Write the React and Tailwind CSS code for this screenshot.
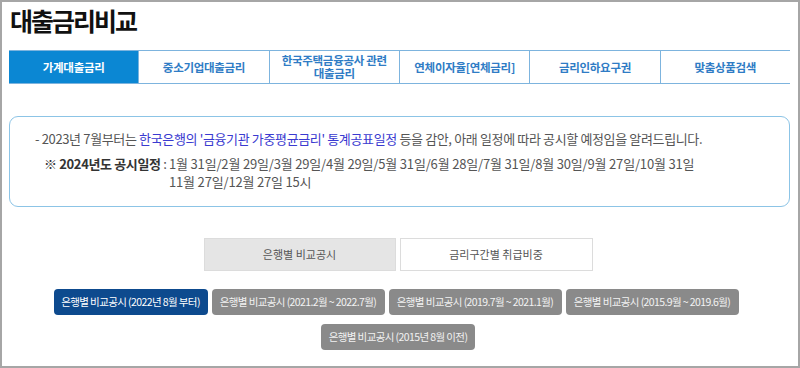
import React from "react";

const tabs = [
  "가계대출금리",
  "중소기업대출금리",
  "한국주택금융공사 관련\n대출금리",
  "연체이자율[연체금리]",
  "금리인하요구권",
  "맞춤상품검색",
];

const btns = [
  "은행별 비교공시 (2021.2월 ~ 2022.7월)",
  "은행별 비교공시 (2019.7월 ~ 2021.1월)",
  "은행별 비교공시 (2015.9월 ~ 2019.6월)",
];

export default function App() {
  return (
    <div
      className="w-[800px] h-[368px] bg-white border-2 border-[#a6a6a6] overflow-hidden"
      style={{ fontFamily: '"Noto Sans CJK KR", "Noto Sans", sans-serif' }}
    >
      <div className="pl-[7px] pr-[8px]">
        <h1 className="text-[25px] leading-[30px] font-bold text-[#111] tracking-[-2px] pt-[3px] pl-[1px]">
          대출금리비교
        </h1>

        <div className="mt-[15px] flex h-[34px] border-y border-[#7db4de]">
          {tabs.map((t, i) => (
            <div
              key={i}
              className={
                "flex-1 flex items-center justify-center text-center text-[11.5px] leading-[13px] font-bold whitespace-pre-line tracking-[-0.3px] " +
                (i === 0
                  ? "bg-[#0b87d3] text-white"
                  : "text-[#2f7cc5] border-l border-[#7db4de]")
              }
            >
              {t}
            </div>
          ))}
        </div>

        <div className="mt-[32px] h-[91px] border border-[#8cc4e6] rounded-[9px] pl-[25px] pt-[13px] text-[13px] text-[#555] tracking-[-0.36px]">
          <p className="leading-[18px]">
            - 2023년 7월부터는{" "}
            <span className="text-[#3a3ad0]">
              한국은행의 '금융기관 가중평균금리' 통계공표일정
            </span>{" "}
            등을 감안, 아래 일정에 따라 공시할 예정임을 알려드립니다.
          </p>
          <div className="flex mt-[7px] pl-[9px] leading-[18px]">
            <span className="font-bold text-[#333] whitespace-nowrap">
              ※ 2024년도 공시일정
            </span>
            <span className="whitespace-nowrap">&nbsp;:&nbsp;</span>
            <span className="text-[#555] tracking-[-0.18px]">
              1월 31일/2월 29일/3월 29일/4월 29일/5월 31일/6월 28일/7월 31일/8월 30일/9월 27일/10월 31일
              <br />
              11월 27일/12월 27일 15시
            </span>
          </div>
        </div>

        <div className="mt-[31px] flex justify-center gap-[4px] pr-[3px]">
          <div className="w-[192px] h-[33px] flex items-center justify-center bg-[#e5e5e5] border border-[#dcdcdc] text-[11px] text-[#555]">
            은행별 비교공시
          </div>
          <div className="w-[193px] h-[33px] flex items-center justify-center bg-white border border-[#dcdcdc] text-[11px] text-[#555]">
            금리구간별 취급비중
          </div>
        </div>

        <div className="mt-[18px] flex justify-center gap-[4px] pr-[7px]">
          <div className="w-[154px] h-[26px] flex items-center justify-center rounded-[4px] bg-[#0d4a8e] text-white text-[10.5px] tracking-[-0.6px]">
            은행별 비교공시 (2022년 8월 부터)
          </div>
          {btns.map((b, i) => (
            <div
              key={i}
              className="w-[173px] h-[26px] flex items-center justify-center rounded-[4px] bg-[#8a8a8a] text-[#f2f2f2] text-[10.5px] tracking-[-0.6px]"
            >
              {b}
            </div>
          ))}
        </div>
        <div className="mt-[9px] flex justify-center pr-[3px]">
          <div className="w-[154px] h-[26px] flex items-center justify-center rounded-[4px] bg-[#8a8a8a] text-[#f2f2f2] text-[10.5px] tracking-[-0.6px]">
            은행별 비교공시 (2015년 8월 이전)
          </div>
        </div>
      </div>
    </div>
  );
}
